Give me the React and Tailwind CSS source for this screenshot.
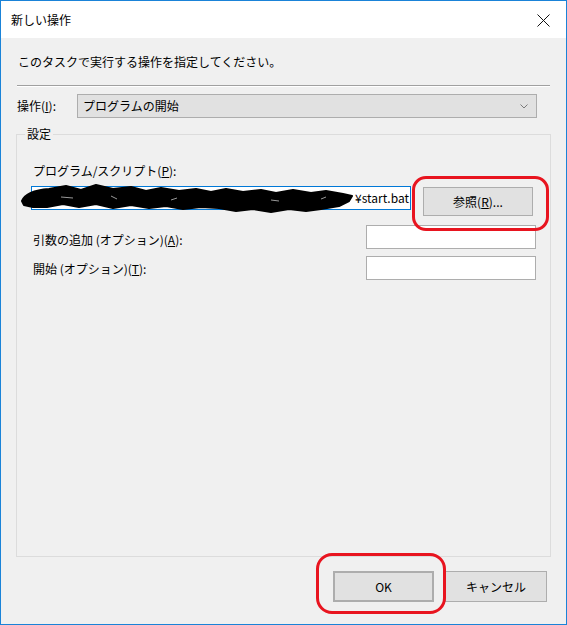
import React from "react";

const F = "font-['Noto_Sans_CJK_JP','Noto_Sans',sans-serif]";

function Btn({ children, className = "" }) {
  return (
    <div
      className={`flex items-center justify-center bg-[#e1e1e1] border border-[#adadad] text-[12px] leading-[16px] ${className}`}
    >
      {children}
    </div>
  );
}

export default function App() {
  return (
    <div
      className={`relative w-[567px] h-[625px] border border-[#1a83d8] bg-[#f0f0f0] flex flex-col text-[12px] leading-[16px] text-[#000] ${F}`}
    >
      {/* title bar */}
      <div className="h-[37px] bg-white flex items-center justify-between shrink-0">
        <span className="pl-[10px] pt-[1px]">新しい操作</span>
        <div className="w-[42px] h-full flex items-center justify-center pt-[2px] mr-[2px]">
          <svg width="13" height="13" viewBox="0 0 13 13">
            <path d="M0.5 0.5 L12.5 12.5 M12.5 0.5 L0.5 12.5" stroke="#111" strokeWidth="1" />
          </svg>
        </div>
      </div>

      {/* content */}
      <div className="flex flex-col px-[15px]">
        <div className="mt-[16px] ml-[2px]">このタスクで実行する操作を指定してください。</div>
        <div className="mt-[15px] mx-[1px] h-[2px] border-t border-[#a0a0a0] border-b border-b-white" />

        <div className="mt-[7px] flex items-center">
          <div className="ml-[1px] w-[60px]">
            操作(<span className="underline">I</span>):
          </div>
          <div className="w-[460px] h-[24px] bg-[#e1e1e1] border border-[#adadad] flex items-center justify-between pl-[5px] pr-[8px]">
            <span>プログラムの開始</span>
            <svg width="8" height="5" viewBox="0 0 8 5">
              <path d="M0.5 0.5 L4 4 L7.5 0.5" stroke="#7a7a7a" strokeWidth="1" fill="none" />
            </svg>
          </div>
        </div>

        {/* group box */}
        <div className="relative mt-[16px] h-[423px] border border-[#dcdcdc] flex flex-col pl-[14px] pr-[14px] pt-[28px]">
          <div className="absolute left-[8px] -top-[9px] px-[2px] bg-[#f0f0f0]">設定</div>
          <div className="ml-[2px]">
            プログラム/スクリプト(<span className="underline">P</span>):
          </div>
          <div className="mt-[7px] flex items-start">
            <div className="w-[380px] h-[24px] bg-white border border-[#0078d7] flex items-center justify-end pr-[1px]">
              <span className="whitespace-nowrap">¥start.bat</span>
            </div>
            <Btn className="ml-[12px] mt-[1px] w-[110px] h-[29px]">
              参照(<span className="underline">R</span>)...
            </Btn>
          </div>
          <div className="mt-[9px] flex items-center justify-between">
            <div className="ml-[2px] mt-[5px]">
              引数の追加 (オプション)(<span className="underline">A</span>):
            </div>
            <div className="w-[170px] h-[24px] bg-white border border-[#adadad]" />
          </div>
          <div className="mt-[7px] flex items-center justify-between">
            <div className="ml-[2px] mt-[2px]">
              開始 (オプション)(<span className="underline">T</span>):
            </div>
            <div className="w-[170px] h-[24px] bg-white border border-[#adadad]" />
          </div>
        </div>

        <div className="mt-[14px] flex justify-end gap-[11px] mr-[4px]">
          <Btn className="w-[101px] h-[31px] border-2 border-[#0078d7]">OK</Btn>
          <Btn className="w-[102px] h-[31px]">キャンセル</Btn>
        </div>
      </div>

      {/* redaction scribble */}
      <svg
        className="absolute left-[20px] top-[181px]"
        width="335"
        height="32"
        viewBox="0 0 335 32"
      >
        <path
          d="M1 19 C4 12 14 8 28 7 L45 4 L60 8 L75 3 L92 7 L110 5 L125 9 L140 6 L158 9 L175 7 L190 10 L205 7 L222 10 L240 8 L255 11 L272 8 L290 11 L305 9 L322 12 L331 14 L328 19 L318 24 L300 27 L285 29 L268 27 L250 30 L232 27 L215 29 L198 26 L180 25 L162 27 L145 24 L128 26 L110 23 L92 26 L75 22 L58 25 L42 22 L26 25 L12 25 L3 23 Z"
          fill="#000"
          stroke="#000"
          strokeWidth="2"
          strokeLinejoin="round"
        />
        <path d="M40 15 L52 16 M90 14 L96 17 M150 18 L156 16 M250 18 L258 19 M300 17 L305 15" stroke="#ffffff" strokeWidth="1" opacity="0.6" />
      </svg>

      {/* red annotations */}
      <div className="absolute left-[411px] top-[175px] w-[137px] h-[55px] border-[3px] border-[#e8141f] rounded-[14px]" />
      <div className="absolute left-[315px] top-[552px] w-[130px] h-[61px] border-[3px] border-[#e8141f] rounded-[16px]" />
    </div>
  );
}
